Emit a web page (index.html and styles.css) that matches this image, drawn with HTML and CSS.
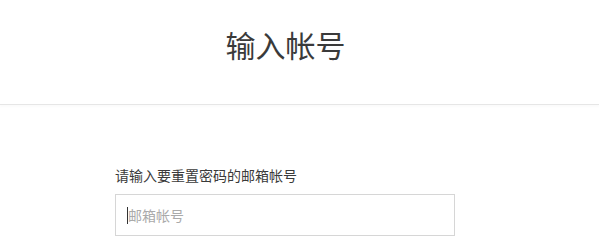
FILE: index.html
```html
<!DOCTYPE html>
<html lang="zh-CN">
<head>
<meta charset="utf-8">
<title>输入帐号</title>
<link rel="stylesheet" href="styles.css">
</head>
<body>
<header class="header">
  <h1 class="title">输入帐号</h1>
</header>
<main class="content">
  <label class="label" for="email">请输入要重置密码的邮箱帐号</label>
  <div class="field">
    <span class="caret"></span><input id="email" class="input" type="text" placeholder="邮箱帐号">
  </div>
</main>
</body>
</html>
```
FILE: styles.css
```css
* { box-sizing: border-box; }
html, body { margin: 0; padding: 0; background: #fff; }
body {
  font-family: "Noto Sans CJK SC", "Liberation Sans", sans-serif;
  color: #333;
  width: 599px;
  height: 252px;
  overflow: hidden;
}
.header {
  height: 105px;
  border-bottom: 1px solid #e6e6e6;
  box-shadow: 0 2px 2px rgba(0,0,0,0.02);
  display: flex;
  justify-content: center;
  padding-right: 28px;
  padding-top: 24px;
}
.title {
  margin: 0;
  font-size: 30px;
  font-weight: 400;
  line-height: 40px;
  color: #3a3a3a;
}
.content {
  padding: 61px 0 0 115px;
  display: flex;
  flex-direction: column;
}
.label {
  font-size: 14px;
  line-height: 18px;
  color: #3a3a3a;
}
.field {
  position: relative;
  margin-top: 10px;
  width: 340px;
  height: 42px;
}
.input {
  width: 100%;
  height: 100%;
  border: 1px solid #d6d6d6;
  border-radius: 0;
  padding: 0 12px;
  font-family: "Noto Sans CJK SC", "Liberation Sans", sans-serif;
  font-size: 14px;
  color: #333;
  outline: none;
  background: #fff;
}
.input::placeholder { color: #aaa; }
.caret {
  position: absolute;
  left: 12px;
  top: 13px;
  width: 1px;
  height: 17px;
  background: #333;
}
```
